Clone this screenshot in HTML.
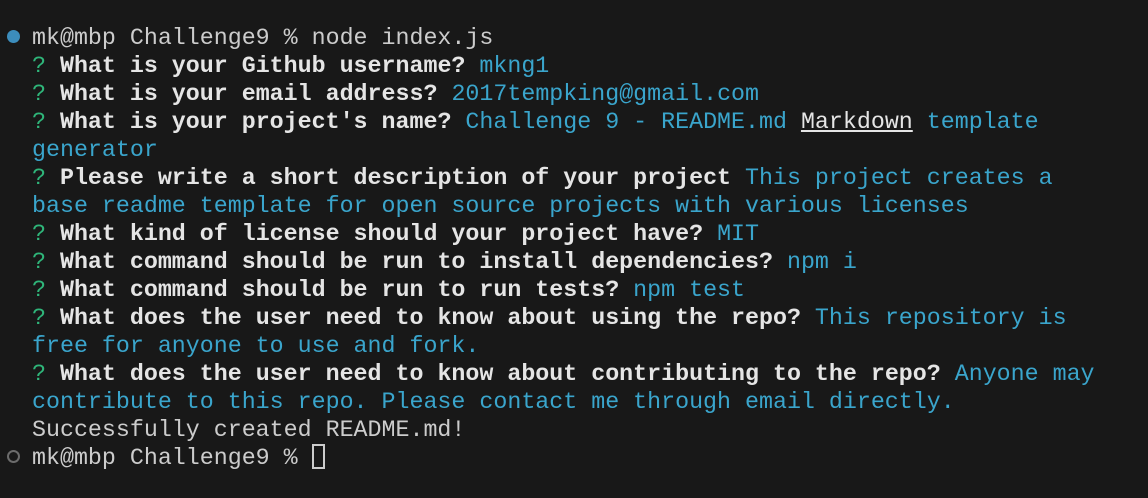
<!DOCTYPE html>
<html><head><style>
html,body{margin:0;padding:0;background:#181818;width:1148px;height:498px;overflow:hidden}
.t{position:absolute;left:32px;top:24px;font-family:"Liberation Mono",monospace;font-size:23.3px;line-height:28px;color:#cccccc;white-space:pre}
b{color:#e5e5e5}
.g{color:#2fb67a}
.c{color:#3aa5cc}
.u{text-decoration:underline;color:#e5e5e5}
.dot{position:absolute;left:7px;width:13px;height:13px;border-radius:50%;box-sizing:border-box}
.cur{display:inline-block;width:13px;height:25px;border:2px solid #cccccc;box-sizing:border-box;vertical-align:-5px}
</style></head><body>
<div class="dot" style="top:30px;background:#3c8dbc"></div>
<div class="dot" style="top:450px;border:2.5px solid #6b6b6b"></div>
<div class="t">mk@mbp Challenge9 % node index.js
<span class="g">?</span> <b>What is your Github username?</b> <span class="c">mkng1</span>
<span class="g">?</span> <b>What is your email address?</b> <span class="c">2017tempking@gmail.com</span>
<span class="g">?</span> <b>What is your project's name?</b> <span class="c">Challenge 9 - README.md <span class="u">Markdown</span> template</span>
<span class="c">generator</span>
<span class="g">?</span> <b>Please write a short description of your project</b> <span class="c">This project creates a</span>
<span class="c">base readme template for open source projects with various licenses</span>
<span class="g">?</span> <b>What kind of license should your project have?</b> <span class="c">MIT</span>
<span class="g">?</span> <b>What command should be run to install dependencies?</b> <span class="c">npm i</span>
<span class="g">?</span> <b>What command should be run to run tests?</b> <span class="c">npm test</span>
<span class="g">?</span> <b>What does the user need to know about using the repo?</b> <span class="c">This repository is</span>
<span class="c">free for anyone to use and fork.</span>
<span class="g">?</span> <b>What does the user need to know about contributing to the repo?</b> <span class="c">Anyone may</span>
<span class="c">contribute to this repo. Please contact me through email directly.</span>
Successfully created README.md!
mk@mbp Challenge9 % <span class="cur"></span></div>
</body></html>
